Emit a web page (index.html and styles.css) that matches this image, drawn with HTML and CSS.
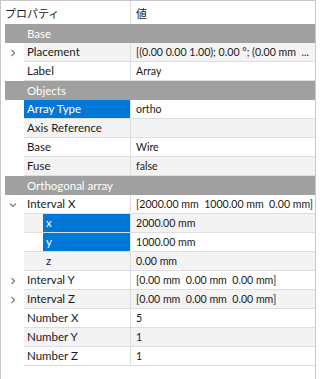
FILE: index.html
```html
<!DOCTYPE html>
<html lang="ja">
<head>
  <meta charset="UTF-8">
  <title>Property View</title>
  <link rel="stylesheet" href="styles.css">
</head>
<body>
  <div class="tree">
    <!-- header -->
    <div class="header">
      <div class="hname">プロパティ</div>
      <div class="hvalue">値</div>
    </div>

    <div class="group">Base</div>
    <div class="row alt">
      <div class="branch"><svg class="chev" viewBox="0 0 8 8"><path d="M2.5 1 L5.5 4 L2.5 7"/></svg></div>
      <div class="name">Placement</div>
      <div class="value">[(0.00 0.00 1.00); 0.00 °; (0.00 mm  ...</div>
    </div>
    <div class="row">
      <div class="branch"></div>
      <div class="name">Label</div>
      <div class="value">Array</div>
    </div>

    <div class="group">Objects</div>
    <div class="row">
      <div class="branch"></div>
      <div class="name selected">Array Type</div>
      <div class="value">ortho</div>
    </div>
    <div class="row alt">
      <div class="branch"></div>
      <div class="name">Axis Reference</div>
      <div class="value"></div>
    </div>
    <div class="row">
      <div class="branch"></div>
      <div class="name">Base</div>
      <div class="value">Wire</div>
    </div>
    <div class="row alt">
      <div class="branch"></div>
      <div class="name">Fuse</div>
      <div class="value">false</div>
    </div>

    <div class="group">Orthogonal array</div>
    <div class="row">
      <div class="branch"><svg class="chev" viewBox="0 0 8 8"><path d="M1 2.5 L4 5.5 L7 2.5"/></svg></div>
      <div class="name">Interval X</div>
      <div class="value">[2000.00 mm  1000.00 mm  0.00 mm]</div>
    </div>
    <div class="row alt">
      <div class="branch"></div>
      <div class="name child"><span class="sel">x</span></div>
      <div class="value">2000.00 mm</div>
    </div>
    <div class="row">
      <div class="branch"></div>
      <div class="name child"><span class="sel">y</span></div>
      <div class="value">1000.00 mm</div>
    </div>
    <div class="row alt">
      <div class="branch"></div>
      <div class="name child"><span>z</span></div>
      <div class="value">0.00 mm</div>
    </div>
    <div class="row">
      <div class="branch"><svg class="chev" viewBox="0 0 8 8"><path d="M2.5 1 L5.5 4 L2.5 7"/></svg></div>
      <div class="name">Interval Y</div>
      <div class="value">[0.00 mm  0.00 mm  0.00 mm]</div>
    </div>
    <div class="row alt">
      <div class="branch"><svg class="chev" viewBox="0 0 8 8"><path d="M2.5 1 L5.5 4 L2.5 7"/></svg></div>
      <div class="name">Interval Z</div>
      <div class="value">[0.00 mm  0.00 mm  0.00 mm]</div>
    </div>
    <div class="row">
      <div class="branch"></div>
      <div class="name">Number X</div>
      <div class="value">5</div>
    </div>
    <div class="row alt">
      <div class="branch"></div>
      <div class="name">Number Y</div>
      <div class="value">1</div>
    </div>
    <div class="row">
      <div class="branch"></div>
      <div class="name">Number Z</div>
      <div class="value">1</div>
    </div>
  </div>
</body>
</html>
```

FILE: styles.css
```css
* {
  box-sizing: border-box;
}

body {
  margin: 0;
  background: #ffffff;
  font-family: Lato, "Noto Sans CJK JP", sans-serif;
  font-size: 11px;
  color: #1a1a1a;
}

.tree {
  width: 316px;
  height: 379px;
  border: 1px solid #c8c8c8;
  border-bottom: none;
  overflow: hidden;
}

.header {
  display: flex;
  height: 23px;
  align-items: center;
  background: #ffffff;
}

.hname {
  width: 130px;
  padding-left: 4px;
  height: 100%;
  display: flex;
  align-items: center;
  border-right: 1px solid #e3e3e3;
  font-family: "Noto Sans CJK JP", sans-serif;
}

.hvalue {
  padding-left: 5px;
  font-family: "Noto Sans CJK JP", sans-serif;
}

.group {
  height: 19px;
  line-height: 19px;
  margin-left: 4px;
  padding-left: 22px;
  background: #a0a0a0;
  color: #ffffff;
  font-size: 11.5px;
}

.row {
  display: flex;
  height: 19px;
}

.branch {
  width: 23px;
  flex: none;
  display: flex;
  align-items: center;
  justify-content: center;
  background: #ffffff;
}

.chev {
  width: 8px;
  height: 8px;
  fill: none;
  stroke: #7a7a7a;
  stroke-width: 1.2;
}

.name, .value {
  height: 19px;
  line-height: 18px;
  border-bottom: 1px solid #dedede;
  white-space: pre;
  overflow: hidden;
}

.name {
  width: 107px;
  flex: none;
  padding-left: 3px;
  border-right: 1px solid #dedede;
  font-size: 11.5px;
}

.value {
  flex: 1;
  padding-left: 5px;
  font-size: 10.6px;
}

.alt .name, .alt .value {
  background: #f3f3f3;
}

.name.selected {
  background: #0078d7;
  color: #ffffff;
}

.name.child {
  padding-left: 19px;
  display: flex;
}

.name.child span {
  flex: 1;
  padding-left: 3px;
}

.name.child .sel {
  background: #0078d7;
  color: #ffffff;
}
```
